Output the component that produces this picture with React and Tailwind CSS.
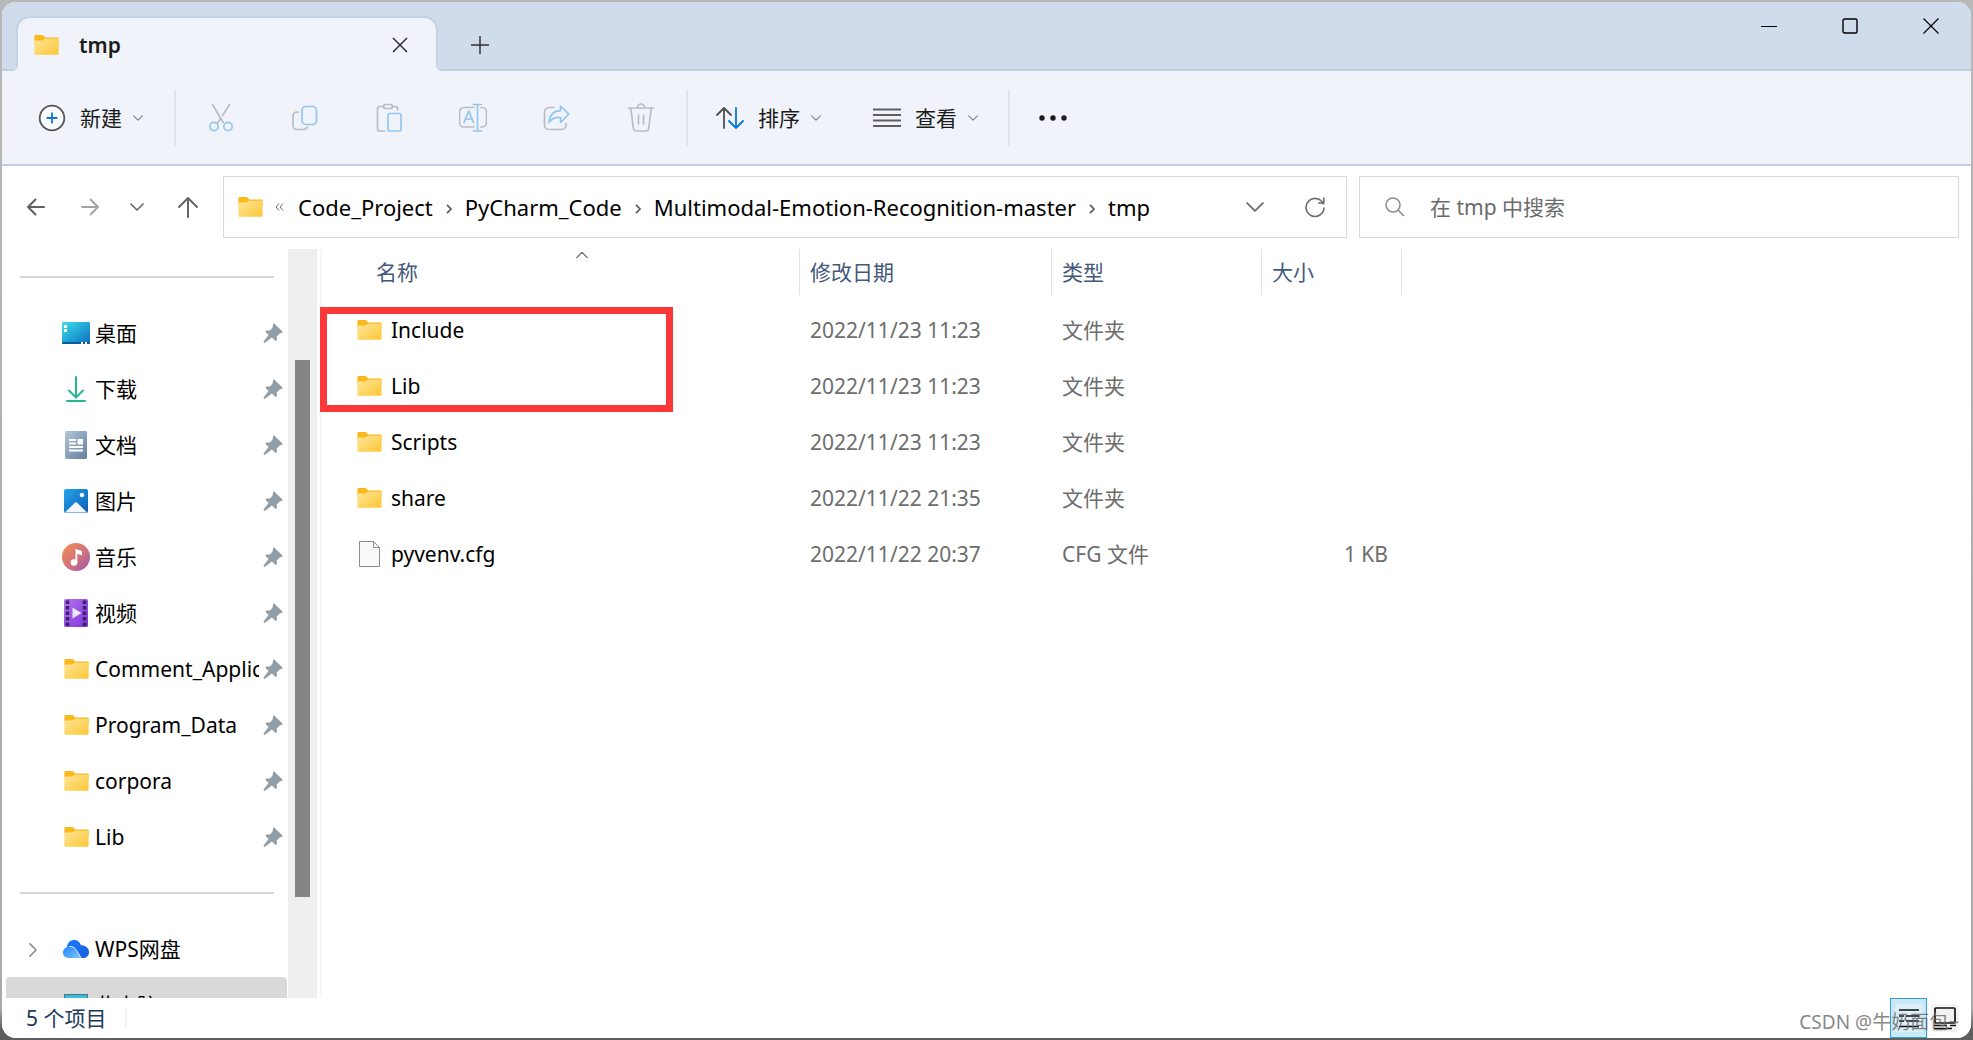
import React from 'react';

const FolderIcon = ({ className }) => (
  <svg viewBox="0 0 25 20" className={className} aria-hidden="true">
    <defs>
      <linearGradient id="folderFront" x1="0" y1="0" x2="1" y2="1">
        <stop offset="0" stopColor="#ffe69a" />
        <stop offset="1" stopColor="#fdc735" />
      </linearGradient>
    </defs>
    <path d="M1.5 0h7.2l2.6 2.6H23.6a1 1 0 0 1 1 1V9H.4V1.2A1.2 1.2 0 0 1 1.5 0z" fill="#f9b91c" />
    <path d="M.4 5.6h7.8c1.2 0 1.8-1.9 3-1.9h13.4v15a1 1 0 0 1-1 1H1.4a1 1 0 0 1-1-1z" fill="url(#folderFront)" />
  </svg>
);

const FileIcon = () => (
  <svg viewBox="0 0 25 28" className="h-7 w-[25px]" aria-hidden="true">
    <path d="M2.5 1.5h14l6 6v19h-20z" fill="#fafafa" stroke="#8c8c8c" />
    <path d="M16.5 1.5v6h6" fill="none" stroke="#8c8c8c" />
  </svg>
);

const DesktopIcon = () => (
  <svg viewBox="0 0 28 28" className="size-7" aria-hidden="true">
    <defs>
      <linearGradient id="desktopFill" x1="0" y1="0" x2="1" y2="1">
        <stop offset="0" stopColor="#38e0ea" />
        <stop offset="1" stopColor="#0f6cc0" />
      </linearGradient>
    </defs>
    <rect x="0" y="3" width="28" height="22" rx="1.2" fill="url(#desktopFill)" />
    <path d="M0 23h28v.8a1.2 1.2 0 0 1-1.2 1.2H1.2A1.2 1.2 0 0 1 0 23.800z" fill="#0b5c94" />
    <path d="M2 6h3v3H2zM2 10h3v3H2zM19 23h2v2h-2zM23 23h2v2h-2z" fill="#fff" />
  </svg>
);

const DownloadIcon = () => (
  <svg viewBox="0 0 28 28" className="size-7" fill="none" stroke="#27b594" strokeWidth="2" strokeLinecap="round" strokeLinejoin="round" aria-hidden="true">
    <path d="M14 2v20M7 15.500l7 7 7-7M5 26h18" />
  </svg>
);

const DocumentIcon = () => (
  <svg viewBox="0 0 28 28" className="size-7" aria-hidden="true">
    <defs>
      <linearGradient id="docFill" x1="0" y1="0" x2="1" y2="1">
        <stop offset="0" stopColor="#b4c6da" />
        <stop offset="1" stopColor="#607f9f" />
      </linearGradient>
    </defs>
    <rect x="3" y="0" width="22" height="28" rx="1.8" fill="url(#docFill)" />
    <path d="M7 8h7v2H7zM7 11.500h7v2H7zM15.500 8H21v5.500h-5.500zM7 15h14v2H7zM7 18.500h14v2H7z" fill="#fff" />
  </svg>
);

const PictureIcon = () => (
  <svg viewBox="0 0 28 28" className="size-7" aria-hidden="true">
    <defs>
      <linearGradient id="picFill" x1="0" y1="0" x2="1" y2="1">
        <stop offset="0" stopColor="#26a3ea" />
        <stop offset="1" stopColor="#0a5fb5" />
      </linearGradient>
    </defs>
    <rect x="2" y="2" width="24" height="24" rx="2" fill="url(#picFill)" />
    <path d="M3 25.500l9.500-9.500q1.500-1.500 3 0l9.500 9.500z" fill="#f1f7fd" />
    <circle cx="20" cy="8" r="2.300" fill="#f1f7fd" />
  </svg>
);

const MusicIcon = () => (
  <svg viewBox="0 0 28 28" className="size-7" aria-hidden="true">
    <defs>
      <linearGradient id="musicFill" x1="0" y1="0" x2="1" y2="1">
        <stop offset=".1" stopColor="#f08a55" />
        <stop offset=".6" stopColor="#cc6f82" />
        <stop offset="1" stopColor="#9a55b5" />
      </linearGradient>
    </defs>
    <circle cx="14" cy="14" r="14" fill="url(#musicFill)" />
    <circle cx="12" cy="19.500" r="3.300" fill="#fff" />
    <path d="M13.500 5.500c1.500 1.500 5 1.500 6.500 3v4c-1.500-1-3-1.200-4.700-1.500v8.500h-1.800z" fill="#fff" />
  </svg>
);

const VideoIcon = () => (
  <svg viewBox="0 0 28 28" className="size-7" aria-hidden="true">
    <defs>
      <linearGradient id="videoFill" x1="0" y1="0" x2="1" y2="1">
        <stop offset="0" stopColor="#b673f0" />
        <stop offset="1" stopColor="#7c35d8" />
      </linearGradient>
    </defs>
    <rect x="2" y="0" width="24" height="28" rx="1.500" fill="url(#videoFill)" />
    <path d="M5.500 1.500v26M22.500 1.500v26" stroke="#3b2263" strokeWidth="3.500" strokeDasharray="3.500 2" fill="none" />
    <path d="M10.500 8.500v11l9-5.500z" fill="#efe6fb" />
  </svg>
);

const CloudIcon = () => (
  <svg viewBox="0 0 28 20" className="h-5 w-7" aria-hidden="true">
    <defs>
      <linearGradient id="cloudTop" x1="0" y1="0" x2="1" y2="1">
        <stop offset="0" stopColor="#1677ff" />
        <stop offset="1" stopColor="#1a5fd8" />
      </linearGradient>
      <linearGradient id="cloudFront" x1="0" y1="0" x2="1" y2="1">
        <stop offset="0" stopColor="#1f84ff" />
        <stop offset="1" stopColor="#7cc7ff" />
      </linearGradient>
    </defs>
    <path d="M5 7.500C6 3 9 1 12 1c3.500 0 6 2 7 5.200 4.500-.2 8 2.800 8 6.800s-3 6-6 6h-5z" fill="url(#cloudTop)" />
    <path d="M7 7.500c3-.5 5 .5 7 3.500l5 8H7C3 19 1 16.500 1 13.500S3.500 8 7 7.500z" fill="url(#cloudFront)" />
    <path d="M7.500 7.500c3-.3 5 .8 7 3.800l4.500 7.500" fill="none" stroke="#fff" strokeWidth=".9" />
  </svg>
);

const ComputerIcon = () => (
  <svg viewBox="0 0 28 28" className="size-7" aria-hidden="true">
    <rect x="2" y="3" width="24" height="18" fill="#5c6b74" />
    <rect x="3" y="4" width="22" height="16" fill="#2fc0dd" />
    <path d="M8 24h12v2H8z" fill="#5c6b74" />
  </svg>
);

const PinIcon = () => (
  <svg viewBox="0 0 20 20" className="size-5 shrink-0" aria-hidden="true">
    <path d="M11.500.8l7.700 7.400c.6.700.2 1.800-.8 1.900l-1.600.2-3 3.200.2 3.100c0 1.300-1.100 1.700-1.900.9L8.800 14.600 2.500 19.600c-1.400.7-2.300-.4-1.700-1.600L5.600 12 3 9.400c-.8-.8-.4-1.900.7-2l3.700-.2 2.200-2.700.3-2.700c.1-1 1-1.600 1.600-1z" fill="#929ea7" />
  </svg>
);

const Chevron = ({ className, color = '#7d8085' }) => (
  <svg viewBox="0 0 16 16" className={className} fill="none" stroke={color} strokeWidth="1.700" strokeLinecap="round" strokeLinejoin="round" aria-hidden="true">
    <path d="M1 4.500l7 7 7-7" />
  </svg>
);

const Crumb = () => (
  <svg viewBox="0 0 6 10" className="mt-1 h-2.5 w-1.5 shrink-0" fill="none" stroke="#5f5f5f" strokeWidth="1.800" aria-hidden="true">
    <path d="M1 .8l4 4.200-4 4.200" />
  </svg>
);

const toolIcons = [
  {
    label: '剪切',
    icon: (
      <>
        <path d="M5.500 1.500l10.800 18M22.500 1.500l-6.800 11M12.800 16.500l-2.300 3.500" stroke="#b9bcc0" />
        <circle cx="7" cy="23.500" r="4.200" stroke="#93c6ee" />
        <circle cx="21" cy="23.500" r="4.200" stroke="#93c6ee" />
      </>
    ),
  },
  {
    label: '复制',
    icon: (
      <>
        <path d="M7.500 9H6a4 4 0 0 0-4 4v9.500a4 4 0 0 0 4 4h6.500c2 0 3.300-.8 3.800-2.500" stroke="#b9bcc0" />
        <rect x="11" y="3.500" width="14.500" height="18" rx="4" stroke="#93c6ee" />
      </>
    ),
  },
  {
    label: '粘贴',
    icon: (
      <>
        <path d="M8.500 3.500H4.500a2 2 0 0 0-2 2V26a2 2 0 0 0 2 2H9.500M17.500 3.500h3a2 2 0 0 1 2 2v1.500" stroke="#b9bcc0" />
        <rect x="8.500" y="1.500" width="9" height="4" rx="2" stroke="#b9bcc0" />
        <rect x="13" y="10.500" width="13" height="17.500" rx="2" stroke="#93c6ee" />
      </>
    ),
  },
  {
    label: '重命名',
    icon: (
      <>
        <path d="M15 4.500H5a4.500 4.500 0 0 0-4.500 4.500v10.500A4.500 4.500 0 0 0 5 24h10M22 4.500h1a4.500 4.500 0 0 1 4.500 4.500v10.500A4.500 4.500 0 0 1 23 24h-1" stroke="#b9bcc0" />
        <path d="M5 19.500l4.700-11.500 4.800 11.500M6.500 16h6.500M14.500 1.500h8M14.500 28h8M18.500 1.500V28" stroke="#93c6ee" />
      </>
    ),
  },
  {
    label: '共享',
    icon: (
      <>
        <path d="M11 4.500H6A4.500 4.500 0 0 0 1.500 9v13A4.500 4.500 0 0 0 6 26.500h12.500A4.500 4.500 0 0 0 23 22v-1.500" stroke="#b9bcc0" />
        <path d="M17.500 3l8.300 8.200-8.300 8.300v-5C12 14.200 8.500 16 6 19.500 6.500 13 10 8 17.500 7.700z" stroke="#93c6ee" />
      </>
    ),
  },
  {
    label: '删除',
    icon: (
      <>
        <path d="M1.500 5h25M10.500 4.500a3.500 3.500 0 0 1 7 0M3.800 5.500l2.600 20A2.800 2.800 0 0 0 9 28h10a2.800 2.800 0 0 0 2.700-2.500l2.500-20M11.500 12v9M16.500 12v9" stroke="#b9bcc0" />
      </>
    ),
  },
];

const pinned = [
  { name: '桌面', icon: <DesktopIcon /> },
  { name: '下载', icon: <DownloadIcon /> },
  { name: '文档', icon: <DocumentIcon /> },
  { name: '图片', icon: <PictureIcon /> },
  { name: '音乐', icon: <MusicIcon /> },
  { name: '视频', icon: <VideoIcon /> },
  { name: 'Comment_Application', icon: <FolderIcon className="h-5 w-[25px]" /> },
  { name: 'Program_Data', icon: <FolderIcon className="h-5 w-[25px]" /> },
  { name: 'corpora', icon: <FolderIcon className="h-5 w-[25px]" /> },
  { name: 'Lib', icon: <FolderIcon className="h-5 w-[25px]" /> },
];

const files = [
  { name: 'Include', date: '2022/11/23 11:23', type: '文件夹', size: '' },
  { name: 'Lib', date: '2022/11/23 11:23', type: '文件夹', size: '' },
  { name: 'Scripts', date: '2022/11/23 11:23', type: '文件夹', size: '' },
  { name: 'share', date: '2022/11/22 21:35', type: '文件夹', size: '' },
  { name: 'pyvenv.cfg', date: '2022/11/22 20:37', type: 'CFG 文件', size: '1 KB' },
];

const path = ['Code_Project', 'PyCharm_Code', 'Multimodal-Emotion-Recognition-master', 'tmp'];

const Separator = () => <div className="h-14 w-0.5 shrink-0 bg-[#e0e4e9]" />;

const TitleBar = () => (
  <header className="flex h-[69px] shrink-0 items-end border-b-2 border-[#c1cde1] bg-[#d0dceb]">
    <div className="relative -mb-0.5 ml-3.5 flex h-[55px] w-[422px] items-center rounded-t-[14px] border-2 border-b-0 border-[#c6d2e4] bg-[#f0f4fa] pl-4 pr-6">
      <svg viewBox="0 0 6 6" className="absolute -left-1.5 bottom-0 size-1.5" aria-hidden="true">
        <path d="M6 0v6H0a6 6 0 0 0 6-6z" fill="#f0f4fa" />
      </svg>
      <svg viewBox="0 0 6 6" className="absolute -right-1.5 bottom-0 size-1.5" aria-hidden="true">
        <path d="M0 0v6h6a6 6 0 0 1-6-6z" fill="#f0f4fa" />
      </svg>
      <FolderIcon className="h-5 w-[25px]" />
      <span className="ml-5 grow font-semibold text-[#1b1b1b]">tmp</span>
      <button aria-label="关闭标签页" className="flex size-6 items-center justify-center">
        <svg viewBox="0 0 16 16" className="size-4" stroke="#222" strokeWidth="1.400">
          <path d="M1 1l14 14M15 1L1 15" />
        </svg>
      </button>
    </div>
    <button aria-label="新标签页" className="mb-3 ml-[30px] flex size-6 items-center justify-center">
      <svg viewBox="0 0 18 18" className="size-[18px]" stroke="#333" strokeWidth="1.500">
        <path d="M9 0v18M0 9h18" />
      </svg>
    </button>
    <div className="ml-auto flex self-start">
      <button aria-label="最小化" className="flex h-12 w-[81px] items-center justify-center">
        <svg viewBox="0 0 16 16" className="size-4" stroke="#000">
          <path d="M0 8.500h16" />
        </svg>
      </button>
      <button aria-label="最大化" className="flex h-12 w-[81px] items-center justify-center">
        <svg viewBox="0 0 16 16" className="size-4" fill="none" stroke="#000" strokeWidth="1.400">
          <rect x="1" y="1" width="14" height="14" rx="1.500" />
        </svg>
      </button>
      <button aria-label="关闭" className="flex h-12 w-[81px] items-center justify-center">
        <svg viewBox="0 0 16 16" className="size-4" stroke="#000" strokeWidth="1.200">
          <path d="M.5.5l15 15M15.500.5l-15 15" />
        </svg>
      </button>
    </div>
  </header>
);

const MenuButton = ({ label, children }) => (
  <button className="flex items-center text-[#1b1b1b]">
    {children}
    <span className="ml-3.5">{label}</span>
    <Chevron className="ml-[11px] size-2.5" />
  </button>
);

const Toolbar = () => (
  <div className="flex h-[95px] shrink-0 items-center border-b-2 border-[#c2cde0] bg-[#f0f4fa] pl-9">
    <MenuButton label="新建">
      <svg viewBox="0 0 28 28" className="size-7" fill="none" strokeWidth="1.800">
        <circle cx="14" cy="14" r="12.300" fill="#fbfcfe" stroke="#555" />
        <path d="M14 8.500v11M8.500 14h11" stroke="#0f7ad2" />
      </svg>
    </MenuButton>
    <div className="ml-[31px] flex items-center gap-[3px]">
      <Separator />
      <div className="flex">
        {toolIcons.map((tool) => (
          <button key={tool.label} aria-label={tool.label} className="flex w-[84px] justify-center">
            <svg viewBox="0 0 28 29" className="h-[29px] w-7" fill="none" strokeWidth="1.700" strokeLinecap="round" strokeLinejoin="round">
              {tool.icon}
            </svg>
          </button>
        ))}
      </div>
      <Separator />
    </div>
    <div className="ml-7 mr-[30px] flex gap-[52px]">
      <MenuButton label="排序">
        <svg viewBox="0 0 28 22" className="h-[22px] w-7" fill="none" strokeWidth="1.800" strokeLinecap="round" strokeLinejoin="round">
          <path d="M8 21V1M1 8l7-7 7 7" stroke="#505050" />
          <path d="M20 1v20M13 14l7 7 7-7" stroke="#0078d4" />
        </svg>
      </MenuButton>
      <MenuButton label="查看">
        <svg viewBox="0 0 28 20" className="h-5 w-7" stroke="#5c5e61" strokeWidth="1.800">
          <path d="M0 1.500h28M0 7h28M0 12.500h28M0 18h28" />
        </svg>
      </MenuButton>
    </div>
    <Separator />
    <button aria-label="更多" className="ml-7">
      <svg viewBox="0 0 30 8" className="h-2 w-[30px]" fill="#1b1b1b">
        <circle cx="4" cy="4" r="2.700" />
        <circle cx="15" cy="4" r="2.700" />
        <circle cx="26" cy="4" r="2.700" />
      </svg>
    </button>
  </div>
);

const NavBar = () => (
  <div className="flex shrink-0 items-stretch pb-[11px] pl-6 pr-3 pt-2.5">
    <div className="flex w-[197px] shrink-0 items-center">
      <button aria-label="后退" className="w-[54px]">
        <svg viewBox="0 0 20 20" className="size-5" fill="none" stroke="#5f5f5f" strokeWidth="2" strokeLinecap="round" strokeLinejoin="round">
          <path d="M18 10H2M9.500 2.500L2 10l7.500 7.500" />
        </svg>
      </button>
      <button aria-label="前进" className="w-[50px]">
        <svg viewBox="0 0 20 20" className="size-5" fill="none" stroke="#a3a3a3" strokeWidth="1.800" strokeLinecap="round" strokeLinejoin="round">
          <path d="M2 10h16M10.500 2.500L18 10l-7.500 7.500" />
        </svg>
      </button>
      <button aria-label="最近浏览的位置" className="w-[47px]">
        <Chevron className="size-3.5" color="#5f5f5f" />
      </button>
      <button aria-label="上一级">
        <svg viewBox="0 0 22 22" className="size-[22px]" fill="none" stroke="#666" strokeWidth="2" strokeLinecap="round" strokeLinejoin="round">
          <path d="M11 21V2M2 11l9-9 9 9" />
        </svg>
      </button>
    </div>
    <div className="flex h-[62px] grow items-center border border-[#d9d9d9] pl-3.5 pr-5">
      <FolderIcon className="h-5 w-[25px]" />
      <svg viewBox="0 0 9 8" className="ml-3 mr-3.5 h-2 w-[9px]" fill="none" stroke="#6f6f6f" aria-hidden="true">
        <path d="M4 .5L1 4l3 3.500M8 .5L5 4l3 3.500" />
      </svg>
      <nav className="flex grow items-center gap-[13px] text-[22px] text-black">
        {path.map((part, i) => (
          <React.Fragment key={part}>
            {i > 0 && <Crumb />}
            <a href="#">{part}</a>
          </React.Fragment>
        ))}
      </nav>
      <button aria-label="以前的位置" className="mr-10">
        <Chevron className="size-[18px]" color="#707070" />
      </button>
      <button aria-label="刷新">
        <svg viewBox="0 0 22 22" className="size-[22px]" fill="none" stroke="#6b6b6b" strokeWidth="1.600">
          <path d="M19.500 8.500A9 9 0 1 0 20 11.500M19.800 1.500V7h-5.500" />
        </svg>
      </button>
    </div>
    <label className="ml-3 flex w-[600px] items-center border border-[#d9d9d9] pl-[25px]">
      <svg viewBox="0 0 20 20" className="size-5 shrink-0" fill="none" stroke="#8a8a8a" strokeWidth="1.500" aria-hidden="true">
        <circle cx="8" cy="8" r="7" />
        <path d="M13 13l6 6" />
      </svg>
      <input
        type="text"
        aria-label="搜索"
        placeholder="在 tmp 中搜索"
        className="ml-[25px] grow outline-none placeholder:text-[#6b6b6b]"
      />
    </label>
  </div>
);

const SideItem = ({ item, pinned }) => (
  <a href="#" className="flex h-14 shrink-0 items-center pl-[60px] pr-[5px]">
    <span className="flex w-7 shrink-0 justify-center">{item.icon}</span>
    <span className="ml-[5px] mr-1 grow overflow-hidden whitespace-nowrap text-black">{item.name}</span>
    {pinned && <PinIcon />}
  </a>
);

const Divider = () => (
  <div className="flex h-14 shrink-0 items-center pl-[18px] pr-3.5">
    <hr className="grow border-t-2 border-[#d6d6d6]" />
  </div>
);

const Sidebar = () => (
  <aside className="flex shrink-0 overflow-hidden">
    <nav className="flex w-[286px] flex-col">
      <Divider />
      {pinned.map((item) => (
        <SideItem key={item.name} item={item} pinned />
      ))}
      <Divider />
      <div className="relative">
        <Chevron className="absolute left-6 top-[22px] size-3.5 -rotate-90" color="#8a8a8a" />
        <SideItem item={{ name: 'WPS网盘', icon: <CloudIcon /> }} />
      </div>
      <div className="ml-1 mr-px rounded-t-sm bg-[#d9d9d9]">
        <a href="#" className="flex h-14 items-center pl-14">
          <ComputerIcon />
          <span className="ml-[5px] text-black">此电脑</span>
        </a>
      </div>
    </nav>
    <div className="mr-[3px] flex w-[29px] flex-col items-center bg-[#efefef] pt-[111px]">
      <div className="h-[537px] w-[15px] bg-[#858585]" />
    </div>
  </aside>
);

const headCell = 'h-[46px] border-r border-[#e2e2e2] pl-2.5 text-left leading-[46px]';

const FileList = () => (
  <main className="relative grow border-l-2 border-[#f6f6f6]">
    <table className="table-fixed border-separate border-spacing-0">
      <thead className="text-[#43597a]">
        <tr>
          <th className="h-[53px] w-[478px] p-0 align-top font-normal">
            <div className="relative h-[46px] border-r border-[#e2e2e2] pl-[54px] text-left leading-[46px]">
              名称
              <Chevron className="absolute left-[254px] top-0 size-3 rotate-180" color="#6a6a6a" />
            </div>
          </th>
          <th className="w-[252px] p-0 align-top font-normal"><div className={headCell}>修改日期</div></th>
          <th className="w-[210px] p-0 align-top font-normal"><div className={headCell}>类型</div></th>
          <th className="w-[140px] p-0 align-top font-normal"><div className={headCell}>大小</div></th>
        </tr>
      </thead>
      <tbody className="text-[#6d6d6d]">
        {files.map((file) => (
          <tr key={file.name} className="h-14">
            <td className="p-0 pl-[35px]">
              <div className="flex items-center gap-[9px] text-black">
                {file.size ? <FileIcon /> : <FolderIcon className="h-5 w-[25px]" />}
                {file.name}
              </div>
            </td>
            <td className="p-0 pl-2.5">{file.date}</td>
            <td className="p-0 pl-2.5">{file.type}</td>
            <td className="p-0 pr-3.5 text-right">{file.size}</td>
          </tr>
        ))}
      </tbody>
    </table>
    {/* red highlight round the first two folders */}
    <div className="pointer-events-none absolute -left-0.5 top-[58px] h-[105px] w-[353px] border-[7px] border-[#fb3737]" />
  </main>
);

const StatusBar = () => (
  <footer className="relative flex h-10 shrink-0 items-center bg-white pl-6 pr-3">
    <span className="text-[#1e395b]">5 个项目</span>
    <div className="ml-[19px] h-[18px] w-0.5 bg-[#f0f0f0]" />
    <div className="ml-auto flex h-full items-center gap-1">
      <button aria-label="详细信息" className="flex h-full w-[37px] items-center justify-center border border-[#2f9fd6] bg-[#cbe8f6]">
        <svg viewBox="0 0 28 28" className="size-7" stroke="#111" strokeWidth="1.600">
          <rect x="0" y="0" width="28" height="28" rx="3" fill="#ddeff8" stroke="none" />
          <path d="M4 6h20M4 12h5M11 12h13M4 17h5M11 17h13M4 22.500h20" />
        </svg>
      </button>
      <button aria-label="大图标" className="flex size-7 items-center justify-center rounded bg-[#f3f3f3]">
        <svg viewBox="0 0 24 24" className="size-6" fill="none" stroke="#111" strokeWidth="1.700">
          <rect x="2" y="2" width="20" height="15" rx="1" />
          <path d="M1 19.500h13M17 19.500h6M1 22.500h18" />
        </svg>
      </button>
    </div>
    <span className="pointer-events-none absolute right-3 top-2.5 text-[19px] leading-7 text-[#666]/80">CSDN @牛奶面包~</span>
  </footer>
);

const App = () => {
  return (
    <div className="h-screen bg-linear-to-b from-[#b8b8b8] from-0% via-[#a9a9a9] via-97% to-[#5f5f5f] to-99% p-0.5 font-['Noto_Sans','Noto_Sans_CJK_SC',sans-serif] text-[21px] leading-7">
      <div className="flex h-full flex-col overflow-hidden rounded-[14px] bg-white">
        <TitleBar />
        <Toolbar />
        <NavBar />
        <div className="flex min-h-0 grow overflow-hidden">
          <Sidebar />
          <FileList />
        </div>
        <StatusBar />
      </div>
    </div>
  );
};

export default App;
